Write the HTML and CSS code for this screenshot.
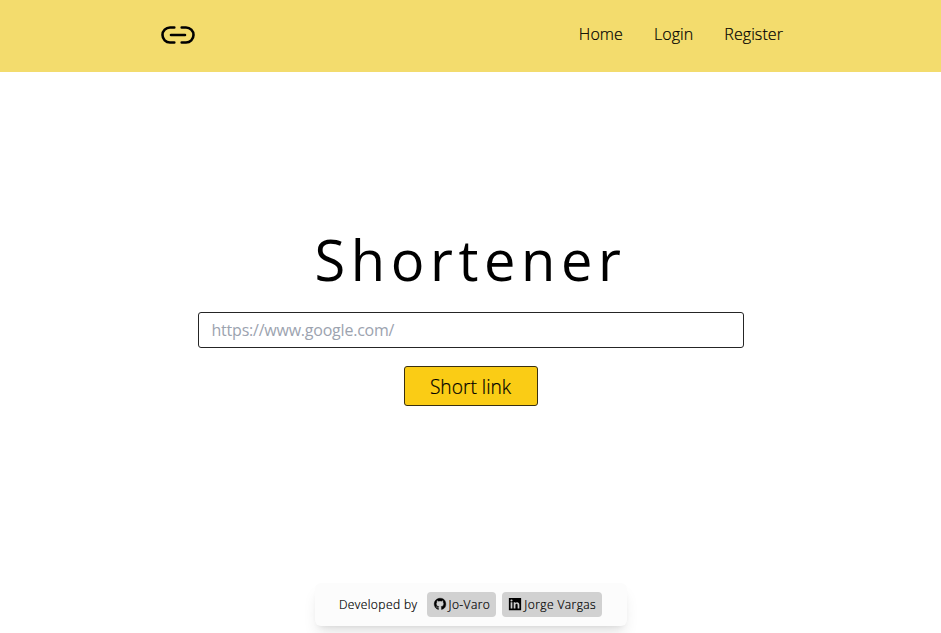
FILE: index.html
```html
<!DOCTYPE html>
<html lang="en">
<head>
<meta charset="utf-8">
<title>Shortener</title>
<link rel="stylesheet" href="styles.css">
</head>
<body>
<header class="header">
  <nav class="nav">
    <a class="logo" aria-label="Home"><svg width="34" height="18" viewBox="0 0 34 18" fill="none" stroke="#000" stroke-width="2.600" stroke-linecap="round"><path d="M13.300 1.500H9a7.500 7.500 0 0 0 0 15h4.300M20.700 1.500H25a7.500 7.500 0 0 1 0 15h-4.300M10 9h14"/></svg></a>
    <div class="links"><a>Home</a><a>Login</a><a>Register</a></div>
  </nav>
</header>
<main class="main">
  <h1 class="title">Shortener</h1>
  <form class="form">
    <input class="field" type="text" placeholder="https://www.google.com/">
    <button class="submit" type="button">Short link</button>
  </form>
</main>
<footer class="footer">
  <span class="by">Developed by</span>
  <a class="chip"><svg width="14" height="14" viewBox="0 0 24 24"><path d="M12 2C6.480 2 2 6.480 2 12c0 4.420 2.870 8.170 6.840 9.490.5.090.68-.22.68-.48v-1.700c-2.780.6-3.370-1.340-3.370-1.340-.45-1.160-1.110-1.470-1.110-1.470-.91-.62.070-.6.070-.6 1 .07 1.530 1.030 1.530 1.030.89 1.530 2.340 1.090 2.910.83.090-.65.350-1.090.640-1.340-2.220-.25-4.560-1.110-4.560-4.940 0-1.090.39-1.980 1.030-2.680-.1-.25-.45-1.270.1-2.650 0 0 .84-.27 2.750 1.020A9.600 9.600 0 0 1 12 6.840c.85 0 1.710.11 2.500.34 1.910-1.290 2.750-1.020 2.750-1.020.55 1.380.2 2.400.1 2.650.64.7 1.030 1.590 1.030 2.680 0 3.840-2.340 4.680-4.570 4.930.36.31.69.920.69 1.850v2.740c0 .27.18.58.69.48A10 10 0 0 0 12 2z" stroke="#000" stroke-width=".6"/></svg>Jo-Varo</a>
  <a class="chip"><svg width="14" height="14" viewBox="0 0 16 16"><path fill-rule="evenodd" d="M1 1h14v14H1zM3 6v7h2V6zM4 2.800a1.200 1.200 0 1 0 0 2.400 1.200 1.200 0 0 0 0-2.400zM6.500 6v7h2V9.500c0-2.200 2.500-2.200 2.500 0V13h2V9c0-3.500-3.400-3.800-4.500-2V6z"/></svg>Jorge Vargas</a>
</footer>
</body>
</html>
```
FILE: styles.css
```css
* { box-sizing: border-box; margin: 0; }
body { height: 633px; overflow: hidden; display: flex; flex-direction: column; font-family: "Open Sans", sans-serif; font-weight: 300; color: #000; background: #fff; }
.header { height: 72px; background: #f3dc6d; display: flex; justify-content: center; flex: none; }
.nav { width: 625px; display: flex; align-items: center; justify-content: space-between; padding-bottom: 4px; }
.logo { display: flex; margin-left: 3px; padding-top: 1px; }
.links { display: flex; gap: 31px; font-size: 16px; line-height: 24px; letter-spacing: .08px; -webkit-text-stroke: .2px #000; }
.main { flex: 1; display: flex; flex-direction: column; align-items: center; padding-top: 157px; }
.title { font-size: 56px; line-height: 60px; font-weight: 400; letter-spacing: 5.6px; }
.form { display: flex; flex-direction: column; align-items: center; margin-top: 23px; gap: 18px; }
.field { width: 546px; height: 36px; border: 1px solid #252525; border-radius: 3px; padding: 0 13px; font: 400 16px "Open Sans", sans-serif; letter-spacing: -0.22px; }
.field::placeholder { color: #9ca3af; }
.submit { width: 134px; height: 40px; border: 1px solid #3a3010; border-radius: 3px; background: #facc15; font: 300 19.200px "Open Sans", sans-serif; color: #000; -webkit-text-stroke: .2px #000; }
.footer { align-self: center; width: 312px; height: 43px; margin-bottom: 7px; border-radius: 6px; background: #fcfcfc; display: flex; align-items: center; justify-content: center; gap: 6px; font-size: 12px; letter-spacing: .42px; -webkit-text-stroke: .2px #000; box-shadow: 0 10px 15px -3px #0000001a, 0 4px 6px -4px #0000001a; padding-bottom: 1px; }
.by { margin-right: 3px; }
.chip { height: 25px; padding: 0 6px; border-radius: 4px; background: #d1d1d1; display: flex; align-items: center; gap: 2px; }
```
